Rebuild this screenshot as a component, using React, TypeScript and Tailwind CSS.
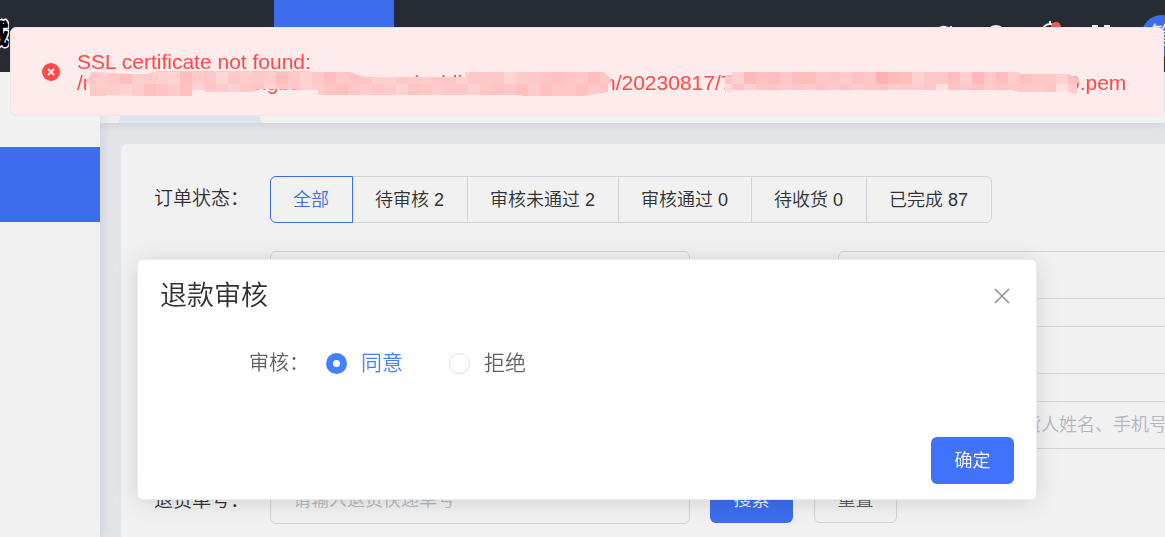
import React, { useState } from "react";

const statusTabs = [
  { value: "all", label: "全部" },
  { value: "pending", label: "待审核 2" },
  { value: "rejected", label: "审核未通过 2" },
  { value: "approved", label: "审核通过 0" },
  { value: "receiving", label: "待收货 0" },
  { value: "done", label: "已完成 87" },
];

const inputClass =
  "h-12 w-[420px] rounded-md border border-[#d0d2da] bg-transparent px-[22px] text-lg text-[#333] placeholder:text-[#b4b7c0] outline-none";

const radioClass =
  "h-[21px] w-[21px] appearance-none rounded-full border border-[#dcdfe6] checked:border-[7px] checked:border-[#437fff]";

// Censored path segments, 12px cells
const mosaicTop =
  "c8 cc c8 be ce cc d0 d2 be ca c8 d4 c8 cc c8 cc be c8 d0 c8 be c8 c4 c4 d0 d0 c8 cc cc c8 c6 d0 c8 c8 c8 d4 ca c8 c6 c0 c6 c8 be c8 ca";
const mosaicBottom =
  "c8 cc cc d2 cc c0 c6 ca c0 d4 c8 cc d0 c8 c4 d0 c8 c8 d4 cc c4 c0 c8 cc c8 ca d2 c4 c8 cc c8 c8 d2 c8 c2 c8 c0 cc c0 c8 c8 c0 c8 c4 d4";
const mosaicTop2 =
  "c4 d0 b9 c2 bc c8 be be c8 c6 cc c2 c8 b0 ba be d0 c8 c8 be ce b8 c8 be cc c0 c6 c8 d0 c0 c4 c8 d0 b6";
const mosaicBottom2 =
  "dc c4 d0 c8 c4 cc c8 cc c4 cc c4 cc c8 c4 cc cc cc c8 e0 c4 c8 c2 cc c4 c8 c8 cc c4 e0 cc c8 c8 c4 cc";

const Cells = ({ row, x, y }: { row: string; x: number; y: number }) => (
  <>
    {row.split(" ").map((tone, i) => (
      <rect
        key={i}
        x={x + i * 12}
        y={y}
        width="12"
        height="12"
        fill={`#ff${tone}${tone}`}
      />
    ))}
  </>
);

const Mosaic = () => (
  <svg
    className="pointer-events-none absolute left-0 top-0"
    width="1060"
    height="48"
    viewBox="76 51 1060 48"
    aria-hidden="true"
  >
    <clipPath id="censorA">
      <path d="M85 83L92 72L130 74L146 74L158 71H310L350 72L358 75L366 77H465V72H604L611 79V83L608 84V92L595 94L584 96H522L520 95H318V90L258 89L254 92H206L204 90H192V96H138L106 95V96H90V84Z" />
    </clipPath>
    <clipPath id="censorB">
      <path d="M725 75H732V72H1018L1021 74H1068L1076 77L1080 81L1077 84V92L1075 95L1070 92H1020L1012 90H732V93H725Z" />
    </clipPath>
    <g clipPath="url(#censorA)">
      <Cells row={mosaicTop} x={84} y={72} />
      <Cells row={mosaicBottom} x={84} y={84} />
      <rect x="156" y="71" width="154" height="1" fill="#ffc8c8" />
    </g>
    <g clipPath="url(#censorB)">
      <Cells row={mosaicTop2} x={720} y={72} />
      <Cells row={mosaicBottom2} x={720} y={84} />
    </g>
  </svg>
);

const Header = () => (
  <header className="flex h-[72px] bg-[#272b33]">
    <div className="flex h-[72px] w-[9px] items-center justify-end overflow-hidden">
      <span className="text-[28px] font-black text-black [paint-order:stroke] [-webkit-text-stroke:3px_white]">
        城
      </span>
    </div>
    <nav className="flex flex-1 pl-[265px]">
      <a href="#orders" aria-label="订单" className="block h-full w-[120px] bg-[#3d6ded]" />
    </nav>
    <div className="flex w-[232px] shrink-0 items-start gap-[30px] pt-[22px] text-[#f1f1f1]">
      <svg width="22" height="22" viewBox="0 0 22 22" fill="none" stroke="currentColor" strokeWidth="2" className="mt-[2px] shrink-0">
        <path d="M5 5a8 8 0 0 1 13 3M17 17a8 8 0 0 1-13-3M18 2v6h-6M4 20v-6h6" />
      </svg>
      <svg width="22" height="22" viewBox="0 0 22 22" fill="none" stroke="currentColor" strokeWidth="2" className="mt-[2px] shrink-0">
        <circle cx="11" cy="11" r="9" />
        <path d="M11 6v6M11 14v2" />
      </svg>
      <svg width="24" height="26" viewBox="0 0 24 26" fill="none" stroke="currentColor" strokeWidth="2" className="-mt-1 shrink-0 overflow-visible">
        <path d="M5 20v-6a8 8 0 0 1 16 0v6M2 20h22M13 3v3M11 23h4" />
        <circle cx="19" cy="9" r="5" fill="#f05a5a" stroke="none" />
      </svg>
      <svg width="20" height="20" viewBox="0 0 20 20" fill="none" stroke="currentColor" strokeWidth="2" className="mt-[2px] shrink-0">
        <path d="M2 8V2h5M13 2h5v6M2 12v6h5M13 18h5v-6" />
      </svg>
      <div className="-mt-[7px] flex h-[42px] w-[42px] shrink-0 items-center justify-center rounded-full bg-[#3d6ded] text-2xl">
        管
      </div>
    </div>
  </header>
);

const ErrorMessage = () => (
  <div
    role="alert"
    className="fixed left-[10px] right-px top-[27px] z-20 flex h-[89px] items-center rounded-md border border-[#fddcdf] bg-[#feebeb] pl-[31px] text-[21px] leading-[21px] text-[#ff4949]"
  >
    <svg width="18" height="18" viewBox="0 0 18 18" className="shrink-0">
      <circle cx="9" cy="9" r="9" fill="#ff4949" />
      <path d="M6 6l6 6M12 6l-6 6" stroke="#feebeb" strokeWidth="2" />
    </svg>
    <div className="relative ml-4 w-[1060px] shrink-0 pl-px">
      <p>SSL certificate not found:</p>
      <p className="flex whitespace-nowrap">
        <span className="w-[112px]">/r</span>
        <span className="w-[66px]">w.</span>
        <span className="w-[157px]">ngban</span>
        <span className="w-[192px]">/public</span>
        <span className="w-[464px]">n/20230817/7</span>
        <span>0.pem</span>
      </p>
      <Mosaic />
    </div>
  </div>
);

const RefundDialog = () => {
  const [audit, setAudit] = useState("agree");

  return (
    <div className="fixed inset-0 z-10 pl-[137px] pr-[128px] pt-[259px]">
      <div
        role="dialog"
        aria-labelledby="dialog-title"
        className="rounded-md border border-[#e8eaf4] bg-white shadow-[0_2px_24px_rgba(0,0,0,0.12)]"
      >
        <div className="flex items-center justify-between pl-[22px] pr-[25px] pt-[18px]">
          <h2 id="dialog-title" className="text-[27px] leading-9 text-[#303133]">
            退款审核
          </h2>
          <button type="button" aria-label="关闭" className="text-[#909399]">
            <svg width="18" height="18" viewBox="0 0 18 18" fill="none" stroke="currentColor" strokeWidth="1.6">
              <path d="M2 2l14 14M16 2L2 16" />
            </svg>
          </button>
        </div>
        <div className="mt-[33px] flex h-8 items-center pl-[111px] text-[#606266]">
          <span className="w-[77px] text-xl">审核：</span>
          <label
            className={`flex w-[123px] items-center gap-[14px] text-[21px] ${
              audit === "agree" ? "text-[#437fff]" : ""
            }`}
          >
            <input
              type="radio"
              name="audit"
              checked={audit === "agree"}
              onChange={() => setAudit("agree")}
              className={radioClass}
            />
            同意
          </label>
          <label
            className={`flex items-center gap-[14px] text-[21px] ${
              audit === "refuse" ? "text-[#437fff]" : ""
            }`}
          >
            <input
              type="radio"
              name="audit"
              checked={audit === "refuse"}
              onChange={() => setAudit("refuse")}
              className={radioClass}
            />
            拒绝
          </label>
        </div>
        <div className="flex justify-end pb-[15px] pr-[22px] pt-[58px]">
          <button type="button" className="h-[47px] w-[83px] rounded-md bg-[#4073fa] text-lg text-white">
            确定
          </button>
        </div>
      </div>
    </div>
  );
};

const OrderFilter = () => {
  const [status, setStatus] = useState("all");

  return (
    <form className="flex w-[1170px] flex-col gap-[27px] rounded-md bg-[#f1f1f1] pb-10 pl-[33px] pt-8 text-[#303133]">
      <div className="flex h-12 items-start">
        <span className="w-[116px] text-[19px] leading-[46px]">订单状态：</span>
        <div className="flex">
          {statusTabs.map((tab) => (
            <label
              key={tab.value}
              className={`-ml-px flex h-[47px] items-center border pl-[22px] pr-[23px] text-lg first:ml-0 first:rounded-l-md last:rounded-r-md ${
                status === tab.value
                  ? "relative border-[#3d6ded] text-[#3d6ded]"
                  : "border-[#d0d2da]"
              }`}
            >
              <input
                type="radio"
                name="status"
                className="sr-only"
                checked={status === tab.value}
                onChange={() => setStatus(tab.value)}
              />
              {tab.label}
            </label>
          ))}
        </div>
      </div>
      <div className="grid grid-cols-[420px_420px] gap-x-[148px] gap-y-[27px] pl-[116px]">
        <input aria-label="退款单号" className={inputClass} />
        <input aria-label="退款时间" className={inputClass} />
        <input aria-label="退款类型" className={inputClass} />
        <input aria-label="商品名称" className={inputClass} />
        <input aria-label="退货状态" className={inputClass} />
        <input
          aria-label="订单搜索"
          placeholder="请输入订单编号、收货人姓名、手机号"
          className={inputClass}
        />
      </div>
      <div className="flex items-start">
        <label htmlFor="express" className="w-[116px] text-[19px] leading-[50px]">
          退货单号：
        </label>
        <input id="express" placeholder="请输入退货快递单号" className={inputClass} />
        <button type="button" className="ml-5 h-[47px] w-[83px] rounded-md bg-[#3d6ded] text-lg text-[#f1f1f1]">
          搜索
        </button>
        <button type="button" className="ml-[21px] h-[47px] w-[83px] rounded-md border border-[#d0d2da] text-lg text-[#5b5d61]">
          重置
        </button>
      </div>
    </form>
  );
};

const App = () => {
  return (
    <div className="flex h-screen flex-col overflow-hidden bg-[#e4e5e9] font-[350] [font-family:'Liberation_Sans','Noto_Sans_CJK_SC',sans-serif]">
      <Header />
      <div className="flex min-h-0 flex-1">
        <aside className="relative w-[100px] shrink-0 bg-[#f1f1f1] pt-[75px] shadow-[2px_0_12px_rgba(0,21,41,0.1)]">
          <a href="#refund" aria-label="退款" className="block h-[75px] bg-[#3d6ded]" />
        </aside>
        <main className="min-w-0 flex-1 overflow-hidden">
          <div className="flex h-[51px] items-end bg-[#f1f1f1] pl-[18px] shadow-[0_1px_8px_rgba(0,21,41,0.12)]">
            <div className="h-[37px] w-[144px] bg-[#dfe5f1] [clip-path:polygon(16px_0,128px_0,100%_100%,0_100%)]" />
          </div>
          <div className="pl-[21px] pt-[21px]">
            <OrderFilter />
          </div>
        </main>
      </div>
      <RefundDialog />
      <ErrorMessage />
    </div>
  );
};

export default App;
